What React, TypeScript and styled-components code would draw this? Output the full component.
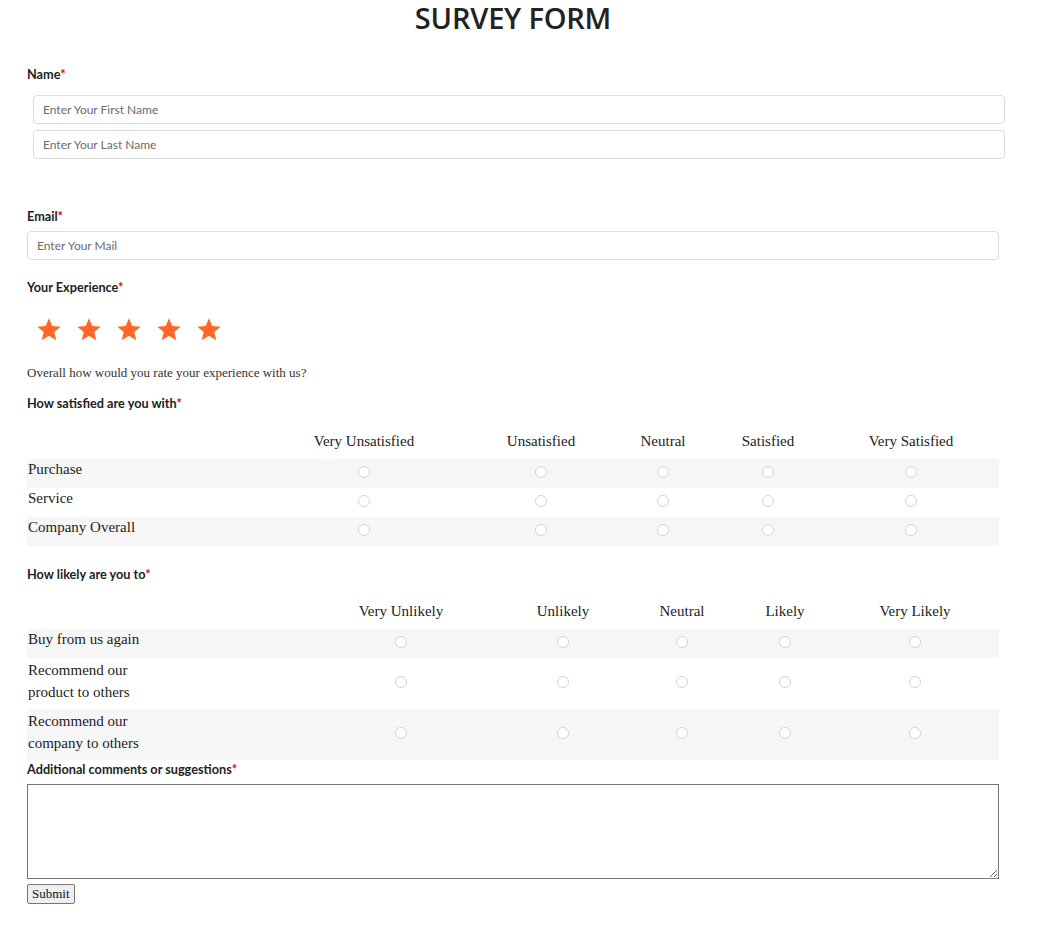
import React from "react";
import styled, { createGlobalStyle } from "styled-components";

const Global = createGlobalStyle`
  html, body { margin: 0; padding: 0; background: #fff; }
  body { font-family: Lato, "Open Sans", sans-serif; color: #222; }
  * { box-sizing: border-box; }
`;

const Page = styled.form`
  padding: 0 49px 30px 27px;
  width: 1048px;
`;

const Title = styled.h1`
  margin: 0;
  height: 36px;
  line-height: 36px;
  text-align: center;
  font-family: "Open Sans", sans-serif;
  font-weight: 600;
  font-size: 29px;
  color: #222;
  letter-spacing: -0.2px;
`;

const Label = styled.label<{ $top: number; $bottom: number }>`
  display: block;
  margin-top: ${(p) => p.$top}px;
  margin-bottom: ${(p) => p.$bottom}px;
  font-family: Lato, sans-serif;
  font-weight: 700;
  font-size: 12.7px;
  line-height: 16px;
  color: #222;
`;

const Req = styled.span`
  color: #e00000;
`;

const TextInput = styled.input<{ $indent?: number }>`
  display: block;
  width: 972px;
  height: 29px;
  margin: 0 0 6px ${(p) => p.$indent ?? 0}px;
  padding: 0 9px;
  border: 1px solid #dcdcdc;
  border-radius: 4px;
  font-family: Lato, sans-serif;
  font-size: 12px;
  color: #333;
  outline: none;
  &::placeholder { color: #6b6b6b; }
`;

const Stars = styled.div`
  display: flex;
  gap: 14px;
  margin: 22px 0 0 9px;
  height: 26px;
`;

const Hint = styled.p`
  margin: 22px 0 0;
  font-family: "Liberation Serif", serif;
  font-size: 13px;
  line-height: 16px;
  color: #333;
`;

const Table = styled.table`
  width: 972px;
  border-collapse: collapse;
  table-layout: fixed;
  font-family: "Liberation Serif", serif;
  font-size: 15px;
  color: #222;
`;

const HeadCell = styled.th`
  font-weight: 400;
  height: 36px;
  padding: 0;
  text-align: center;
  vertical-align: middle;
`;

const Row = styled.tr<{ $shade: boolean; $h: number }>`
  background: ${(p) => (p.$shade ? "#f6f6f6" : "#fff")};
  height: ${(p) => p.$h}px;
`;

const RowLabel = styled.td`
  padding: 0 0 0 1px;
  vertical-align: middle;
  line-height: 22px;
`;

const RowText = styled.span`
  display: block;
  max-width: 125px;
  margin-top: -6px;
`;

const RowTextWide = styled.span`
  display: block;
  margin-top: -9px;
`;

const RadioCell = styled.td`
  text-align: center;
  vertical-align: middle;
  padding: 0 0 4px;
  line-height: 0;
`;

const Radio = styled.input`
  appearance: none;
  -webkit-appearance: none;
  width: 12px;
  height: 12px;
  margin: 0;
  border: 1px solid #d4d4d4;
  border-radius: 50%;
  background: #fff;
  display: inline-block;
  vertical-align: middle;
`;

const Comments = styled.textarea`
  display: block;
  width: 972px;
  height: 95px;
  margin: 0;
  border: 1px solid #767676;
  border-radius: 0;
  resize: both;
`;

const Submit = styled.button`
  margin-top: 5px;
  height: 20px;
  padding: 0 4px;
  font-family: "Liberation Serif", serif;
  font-size: 13px;
  background: #efefef;
  border: 1px solid #767676;
  border-radius: 2px;
  color: #111;
  display: block;
`;

const Star = () => (
  <svg width="26" height="26" viewBox="0 0 24 24">
    <path
      d="M12 1.2l3.1 7.1 7.7.6-5.9 5 1.8 7.6L12 17.4l-6.7 4.1 1.8-7.6-5.9-5 7.7-.6z"
      fill="#ff6628"
    />
  </svg>
);

type Grid = {
  cols: string[];
  widths: number[];
  rows: { label: string; wrap: boolean; h: number }[];
  name: string;
};

const satisfied: Grid = {
  name: "sat",
  cols: ["Very Unsatisfied", "Unsatisfied", "Neutral", "Satisfied", "Very Satisfied"],
  widths: [232, 210, 144, 100, 110, 176],
  rows: [
    { label: "Purchase", wrap: false, h: 29 },
    { label: "Service", wrap: false, h: 29 },
    { label: "Company Overall", wrap: false, h: 29 },
  ],
};

const likely: Grid = {
  name: "lik",
  cols: ["Very Unlikely", "Unlikely", "Neutral", "Likely", "Very Likely"],
  widths: [274, 200, 124, 114, 92, 168],
  rows: [
    { label: "Buy from us again", wrap: false, h: 29 },
    { label: "Recommend our product to others", wrap: true, h: 51 },
    { label: "Recommend our company to others", wrap: true, h: 51 },
  ],
};

const Matrix = ({ g }: { g: Grid }) => (
  <Table>
    <colgroup>
      {g.widths.map((w, i) => (
        <col key={i} style={{ width: w }} />
      ))}
    </colgroup>
    <thead>
      <tr>
        <HeadCell />
        {g.cols.map((c) => (
          <HeadCell key={c}>{c}</HeadCell>
        ))}
      </tr>
    </thead>
    <tbody>
      {g.rows.map((r, i) => (
        <Row key={r.label} $shade={i % 2 === 0} $h={r.h}>
          <RowLabel>
            {r.wrap ? <RowText>{r.label}</RowText> : <RowTextWide>{r.label}</RowTextWide>}
          </RowLabel>
          {g.cols.map((c) => (
            <RadioCell key={c}>
              <Radio type="radio" name={`${g.name}-${i}`} />
            </RadioCell>
          ))}
        </Row>
      ))}
    </tbody>
  </Table>
);

export default function App() {
  return (
    <>
      <Global />
      <Page onSubmit={(e) => e.preventDefault()}>
        <Title>SURVEY FORM</Title>
        <Label $top={30} $bottom={13}>
          Name<Req>*</Req>
        </Label>
        <TextInput $indent={6} placeholder="Enter Your First Name" />
        <TextInput $indent={6} placeholder="Enter Your Last Name" />
        <Label $top={49} $bottom={7}>
          Email<Req>*</Req>
        </Label>
        <TextInput placeholder="Enter Your Mail" />
        <Label $top={19} $bottom={0}>
          Your Experience<Req>*</Req>
        </Label>
        <Stars>
          <Star />
          <Star />
          <Star />
          <Star />
          <Star />
        </Stars>
        <Hint>Overall how would you rate your experience with us?</Hint>
        <Label $top={14} $bottom={12}>
          How satisfied are you with<Req>*</Req>
        </Label>
        <Matrix g={satisfied} />
        <Label $top={20} $bottom={11}>
          How likely are you to<Req>*</Req>
        </Label>
        <Matrix g={likely} />
        <Label $top={1} $bottom={7}>
          Additional comments or suggestions<Req>*</Req>
        </Label>
        <Comments />
        <Submit type="submit">Submit</Submit>
      </Page>
    </>
  );
}
